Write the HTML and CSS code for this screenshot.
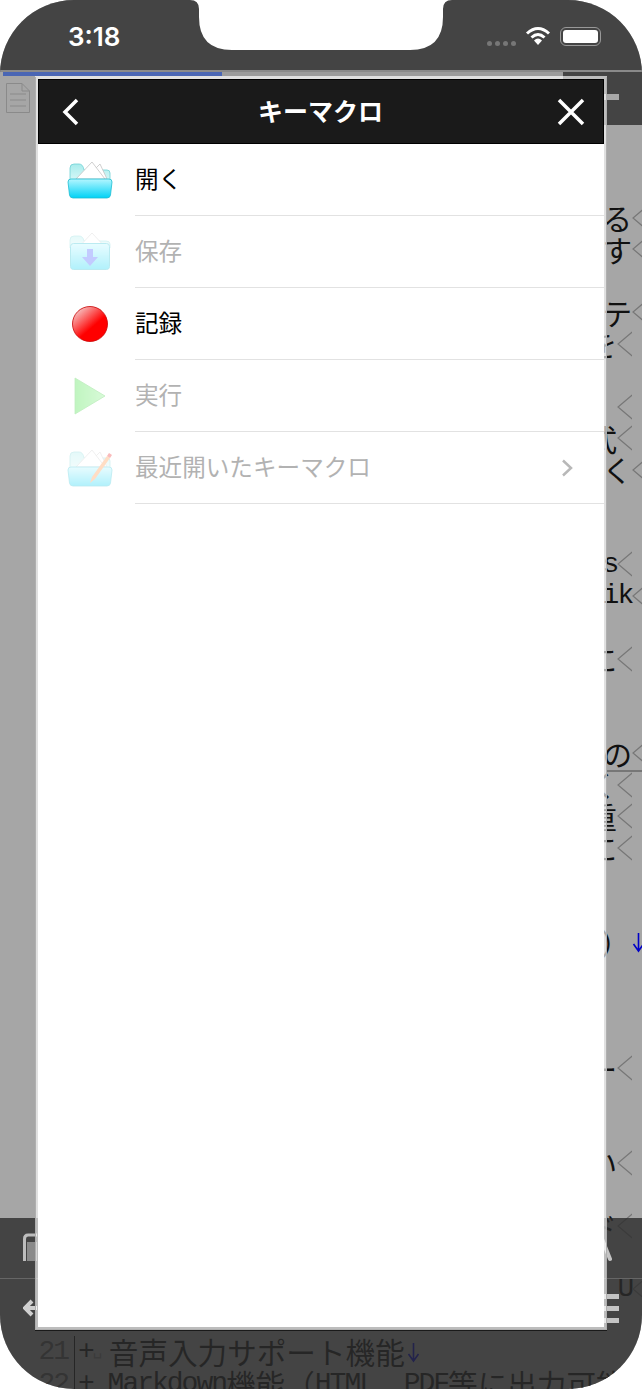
FILE: index.html
```html
<!DOCTYPE html>
<html lang="ja">
<head>
    <meta charset="UTF-8">
    <meta name="viewport" content="width=device-width, initial-scale=1.0">
    <title>キーマクロ</title>
    <link rel="stylesheet" href="styles.css">
</head>
<body>
    <div class="phone">
        <svg class="notch" width="262" height="52" viewBox="0 0 262 52">
            <path d="M0 0 Q9 0 9 9 V17 Q9 50 42 50 H220 Q253 50 253 17 V9 Q253 0 262 0 Z" fill="#fff"/>
        </svg>

        <div class="status">
            <span class="time">3:18</span>
            <div class="status-right">
                <div class="signal"><i></i><i></i><i></i><i></i></div>
                <svg width="26" height="20" viewBox="0 0 26 20">
                    <path d="M2 7.5 Q13 -2.5 24 7.5" fill="none" stroke="#fff" stroke-width="3"/>
                    <path d="M6.5 11.5 Q13 5.5 19.5 11.5" fill="none" stroke="#fff" stroke-width="3"/>
                    <path d="M9 14.5 Q13 10.5 17 14.5 L13 19 Z" fill="#fff"/>
                </svg>
                <div class="battery"><div class="battery-fill"></div></div>
            </div>
        </div>

        <div class="strip">
            <div class="strip-progress"></div>
            <div class="strip-rest"></div>
            <div class="strip-end"></div>
        </div>

        <div class="tabbar">
            <svg class="doc-icon" width="24" height="30" viewBox="0 0 24 30">
                <path d="M.5 .5 H16 L23.5 8 V29.5 H.5 Z M16 .5 V8 H23.5" fill="none" stroke="#8a8a8a"/>
                <path d="M4 11 H20 M4 17 H20 M4 23 H20" stroke="#8a8a8a"/>
            </svg>
            <div class="tabbar-end"><div class="tabbar-dash"></div></div>
        </div>

        <div class="editor">
            <div class="line long"><span>る</span><i class="mark"></i></div>
            <div class="line long"><span>す</span><i class="mark"></i></div>
            <div class="line"></div>
            <div class="line long"><span>テ</span><i class="mark"></i></div>
            <div class="line"><span>を</span><i class="mark"></i></div>
            <div class="line"></div>
            <div class="line"><i class="mark"></i></div>
            <div class="line"><span>式</span><i class="mark"></i></div>
            <div class="line long"><span>く</span><i class="mark"></i></div>
            <div class="line"></div>
            <div class="line"></div>
            <div class="line"><span class="latin">s</span><i class="mark"></i></div>
            <div class="line long"><span class="latin">ik</span><i class="mark"></i></div>
            <div class="line"></div>
            <div class="line"><span>に</span><i class="mark"></i></div>
            <div class="line"></div>
            <div class="line"></div>
            <div class="line long cursor"><span>の</span><i class="mark"></i></div>
            <div class="line"><span>く</span><i class="mark"></i></div>
            <div class="line"><span>重</span><i class="mark"></i></div>
            <div class="line"><span>に</span><i class="mark"></i></div>
            <div class="line"></div>
            <div class="line"></div>
            <div class="line long"><span>）</span>
                <svg class="eol" width="15" height="24" viewBox="0 0 15 24"><path d="M6.5 3 V21 M1.5 14 L6.5 21 L11.5 14" fill="none" stroke="#0000c8" stroke-width="1.6"/></svg>
            </div>
            <div class="line"></div>
            <div class="line"></div>
            <div class="line"></div>
            <div class="line"><span>ー</span><i class="mark"></i></div>
            <div class="line"></div>
            <div class="line"></div>
            <div class="line"><span>い</span><i class="mark"></i></div>
            <div class="line"></div>
            <div class="line"><span>ド</span><i class="mark"></i></div>
            <div class="line"></div>
            <div class="line long"><span class="latin">U</span><i class="mark"></i></div>
            <div class="line"></div>
            <div class="line numbered">
                <span class="line-no latin">21</span>
                <span class="latin">+</span><span class="latin space">␣</span><span>音声入力サポート機能</span>
                <svg class="eol" width="15" height="24" viewBox="0 0 15 24"><path d="M6.5 3 V21 M1.5 14 L6.5 21 L11.5 14" fill="none" stroke="#0000c8" stroke-width="1.6"/></svg>
            </div>
            <div class="line numbered">
                <span class="line-no latin">22</span>
                <span class="latin">+ Markdown</span><span>機能（</span><span class="latin">HTML</span><span>、</span><span class="latin">PDF</span><span>等に出力可能</span>
            </div>
        </div>

        <div class="toolbars">
            <div class="toolbar toolbar-top">
                <svg width="14" height="30" viewBox="0 0 14 30">
                    <path d="M14 2 H5 Q1.5 2 1.5 6 V28" fill="none" stroke="#bdbdbd" stroke-width="3"/>
                    <path d="M4 9 H14 V28 H4 Z" fill="#8a8a8a"/>
                </svg>
                <svg width="32" height="30" viewBox="0 0 32 30">
                    <path d="M8 13 L20 1 L30 26" fill="none" stroke="#c4c4c4" stroke-width="4" stroke-linecap="round"/>
                </svg>
            </div>
            <div class="toolbar toolbar-bottom">
                <svg class="back-arrow" width="14" height="18" viewBox="0 0 14 18">
                    <path d="M14 9 H3 M9 2 L2 9 L9 16" fill="none" stroke="#cfcfcf" stroke-width="4"/>
                </svg>
                <div class="menu-icon"><i></i><i></i><i></i></div>
            </div>
        </div>

        <div class="modal">
            <div class="modal-header">
                <svg width="20" height="28" viewBox="0 0 20 28">
                    <path d="M16 2 L4 14 L16 26" fill="none" stroke="#fff" stroke-width="3.5"/>
                </svg>
                <h1 class="modal-title">キーマクロ</h1>
                <svg width="28" height="28" viewBox="0 0 28 28">
                    <path d="M2 2 L26 26 M26 2 L2 26" fill="none" stroke="#fff" stroke-width="3.5"/>
                </svg>
            </div>

            <div class="menu-row">
                <svg class="menu-icon-box" width="48" height="48" viewBox="0 0 48 48">
                    <defs>
                        <linearGradient id="folder-front" x1="0" y1="0" x2="0" y2="1">
                            <stop offset="0" stop-color="#b4f6ff"/>
                            <stop offset="1" stop-color="#00d2f6"/>
                        </linearGradient>
                        <linearGradient id="folder-back" x1="0" y1="0" x2="0" y2="1">
                            <stop offset="0" stop-color="#a8ecec"/>
                            <stop offset="1" stop-color="#d8f8f8"/>
                        </linearGradient>
                        <linearGradient id="record-fill" x1="0.15" y1="0.1" x2="0.75" y2="0.8">
                            <stop offset="0" stop-color="#f6c0c0"/>
                            <stop offset="0.7" stop-color="#ff0000"/>
                        </linearGradient>
                        <linearGradient id="play-fill" x1="0" y1="0" x2="1" y2="0">
                            <stop offset="0" stop-color="#30e030"/>
                            <stop offset="1" stop-color="#80f080"/>
                        </linearGradient>
                    </defs>
                    <path d="M4 25 V12 Q4 8 8 8 H13 Q17 8 18 14 H41 Q44 14 44 17 V25 Z" fill="url(#folder-back)" stroke="#70d0d4" stroke-width=".8"/>
                    <path d="M29 13 L34 8 L41 23 H30 Z" fill="#fff" stroke="#c4c4c4" stroke-width=".8"/>
                    <path d="M10 23 L26 6 L39 23 Z" fill="#fff" stroke="#c4c4c4" stroke-width=".8"/>
                    <path d="M2 26 Q2 23 5 23 H43 Q46 23 46 26 L44.5 39 Q44 42 41 42 H7 Q4 42 3.5 39 Z" fill="url(#folder-front)" stroke="#20bcd0" stroke-width=".8"/>
                </svg>
                <div class="menu-body"><span>開く</span></div>
            </div>

            <div class="menu-row disabled">
                <svg class="menu-icon-box" width="48" height="48" viewBox="0 0 48 48">
                    <path d="M4 20 V12 Q4 8 8 8 H13 Q17 8 18 13 H40 Q44 13 44 16 V20 Z" fill="url(#folder-back)" stroke="#70d0d4" stroke-width=".8"/>
                    <path d="M12 20 L26 5 L40 20 Z" fill="#fff" stroke="#bdbdbd" stroke-width=".8"/>
                    <rect x="4.5" y="15.5" width="39" height="26" rx="3" fill="url(#folder-front)" stroke="#20bcd0"/>
                    <path d="M21 21 H27 V29 H32 L24 38 L16 29 H21 Z" fill="#3a55ff"/>
                </svg>
                <div class="menu-body"><span>保存</span></div>
            </div>

            <div class="menu-row">
                <svg class="menu-icon-box" width="48" height="48" viewBox="0 0 48 48">
                    <circle cx="24" cy="24" r="17.5" fill="url(#record-fill)" stroke="#c80000" stroke-width=".8"/>
                </svg>
                <div class="menu-body"><span>記録</span></div>
            </div>

            <div class="menu-row disabled">
                <svg class="menu-icon-box" width="48" height="48" viewBox="0 0 48 48">
                    <path d="M9 6 L39 24 L9 42 Z" fill="url(#play-fill)" stroke="#30c830" stroke-width=".8"/>
                </svg>
                <div class="menu-body"><span>実行</span></div>
            </div>

            <div class="menu-row disabled">
                <svg class="menu-icon-box" width="48" height="48" viewBox="0 0 48 48">
                    <path d="M4 25 V12 Q4 8 8 8 H13 Q17 8 18 14 H41 Q44 14 44 17 V25 Z" fill="url(#folder-back)" stroke="#70d0d4" stroke-width=".8"/>
                    <path d="M29 13 L34 8 L41 23 H30 Z" fill="#fff" stroke="#c4c4c4" stroke-width=".8"/>
                    <path d="M10 23 L26 6 L39 23 Z" fill="#fff" stroke="#c4c4c4" stroke-width=".8"/>
                    <path d="M2 26 Q2 23 5 23 H43 Q46 23 46 26 L44.5 39 Q44 42 41 42 H7 Q4 42 3.5 39 Z" fill="url(#folder-front)" stroke="#20bcd0" stroke-width=".8"/>
                    <path d="M24 39 L26 33 L41 12 L44 14 L29 35 Z" fill="#ff9040"/>
                    <path d="M41 12 L43 9 L46 11 L44 14 Z" fill="#f02020"/>
                </svg>
                <div class="menu-body">
                    <span>最近開いたキーマクロ</span>
                    <svg class="menu-chevron" width="12" height="18" viewBox="0 0 12 18">
                        <path d="M2 1.5 L10 9 L2 16.5" fill="none" stroke="#b8b8b8" stroke-width="2.5"/>
                    </svg>
                </div>
            </div>
        </div>
    </div>
</body>
</html>
```

FILE: styles.css
```css
* {
    box-sizing: border-box;
}
html, body {
    margin: 0;
    background: #fff;
}
body {
    font-family: "Noto Sans CJK JP", sans-serif;
    overflow: hidden;
}
.phone {
    position: relative;
    width: 642px;
    height: 1389px;
    border-radius: 74px;
    overflow: hidden;
    background: #a6a6a6;
}
.notch {
    position: absolute;
    left: 190px;
    top: 0;
    z-index: 5;
}

/* status bar */
.status {
    height: 70px;
    background: #444;
    display: flex;
    justify-content: space-between;
    align-items: center;
    padding: 2px 41px 0 68px;
}
.time {
    font-family: Inter, sans-serif;
    font-size: 26px;
    font-weight: 600;
    color: #fff;
}
.status-right {
    display: flex;
    align-items: center;
    gap: 9px;
}
.signal {
    display: flex;
    gap: 3px;
    margin-top: 14px;
}
.signal i {
    width: 5px;
    height: 5px;
    border-radius: 50%;
    background: #777;
}
.battery {
    width: 41px;
    height: 19px;
    border: 1.5px solid #999;
    border-radius: 6px;
    padding: 2px;
}
.battery-fill {
    height: 100%;
    background: #fff;
    border-radius: 3px;
}

/* tab area */
.strip {
    height: 6px;
    display: flex;
    border-top: 2px solid #8a8a8a;
    background: #444;
}
.strip-progress {
    width: 222px;
    background: #4a66b4;
    border-left: 3px solid #a6a6a6;
}
.strip-rest {
    flex: 1;
    background: #9c9c9c;
}
.strip-end {
    width: 79px;
    background: #444;
}
.tabbar {
    height: 49px;
    display: flex;
    justify-content: space-between;
    align-items: flex-start;
}
.doc-icon {
    margin: 7px 0 0 6px;
}
.tabbar-end {
    width: 79px;
    height: 49px;
    background: #444;
    display: flex;
    justify-content: flex-end;
    padding: 18px 23px 0 0;
}
.tabbar-dash {
    width: 30px;
    height: 6px;
    background: #a8a8a8;
}

/* editor text behind the dialog */
.editor {
    padding-top: 77px;
    height: 1264px;
    overflow: hidden;
}
.line {
    height: 31.5px;
    display: flex;
    justify-content: flex-end;
    align-items: center;
    font-size: 29.6px;
    line-height: 31.5px;
    color: #111;
    white-space: nowrap;
}
.latin {
    font-family: "Liberation Mono", monospace;
    font-size: 28px;
    letter-spacing: -2px;
}
.mark {
    flex: none;
    width: 14.8px;
    height: 26px;
    margin-right: 10px;
    background: url("data:image/svg+xml,%3Csvg xmlns='http://www.w3.org/2000/svg' width='15' height='26'%3E%3Cpath d='M15 1 L1 13 L15 25' fill='none' stroke='%23777' stroke-width='1.2'/%3E%3C/svg%3E") no-repeat;
}
.long .mark {
    margin-right: -5px;
}
.eol {
    flex: none;
    margin-left: 2px;
}
.long .eol {
    margin-right: -5px;
}
.cursor {
    position: relative;
}
.cursor::after {
    content: "";
    position: absolute;
    left: 607px;
    right: 0;
    bottom: -3px;
    height: 2px;
    background: #777;
}
.numbered {
    justify-content: flex-start;
}
.line-no {
    width: 75px;
    height: 100%;
    padding-right: 6px;
    margin-right: 3px;
    text-align: right;
    color: #555;
    border-right: 1px solid #111;
}
.space {
    font-size: 16px;
    width: 16px;
    color: #777;
    letter-spacing: 0;
}

/* bottom toolbars, translucent over the text */
.toolbars {
    position: absolute;
    left: 0;
    right: 0;
    top: 1218px;
    bottom: 0;
    background: rgba(44, 44, 44, .8);
}
.toolbar {
    display: flex;
    justify-content: space-between;
    padding: 0 23px;
}
.toolbar-top {
    height: 61px;
    align-items: center;
    padding-right: 30px;
    border-bottom: 1px solid #666;
}
.toolbar-bottom {
    padding-top: 15px;
    align-items: flex-start;
}
.back-arrow {
    margin-top: 5px;
}
.menu-icon {
    width: 36px;
    display: flex;
    flex-direction: column;
    gap: 7px;
}
.menu-icon i {
    height: 5px;
    background: #c4c4c4;
}

/* dialog */
.modal {
    position: absolute;
    left: 35px;
    top: 76px;
    width: 572px;
    height: 1254px;
    display: flex;
    flex-direction: column;
    background: #fff;
    background-clip: padding-box;
    border: 3px solid rgba(255, 255, 255, .65);
    box-shadow: 0 1px 0 #1a1a1a;
}
.modal-header {
    flex: none;
    height: 65px;
    display: flex;
    justify-content: space-between;
    align-items: center;
    padding: 0 18px 0 22px;
    background: #1a1a1a;
    border: 1px solid #000;
}
.modal-title {
    margin: 0 0 3px 3px;
    font-size: 25px;
    font-weight: 700;
    color: #fff;
}
.menu-row {
    flex: none;
    height: 72px;
    display: flex;
}
.menu-icon-box {
    flex: none;
    margin: 12px 21px 0 28px;
}
.menu-body {
    flex: 1;
    display: flex;
    justify-content: space-between;
    align-items: center;
    padding: 0 31px 4px 0;
    border-bottom: 1px solid #e2e2e2;
    font-size: 23.6px;
    color: #000;
}
.menu-chevron {
    margin-top: 4px;
}
.disabled .menu-icon-box {
    opacity: .3;
}
.disabled .menu-body {
    color: #b2b2b2;
}
```
